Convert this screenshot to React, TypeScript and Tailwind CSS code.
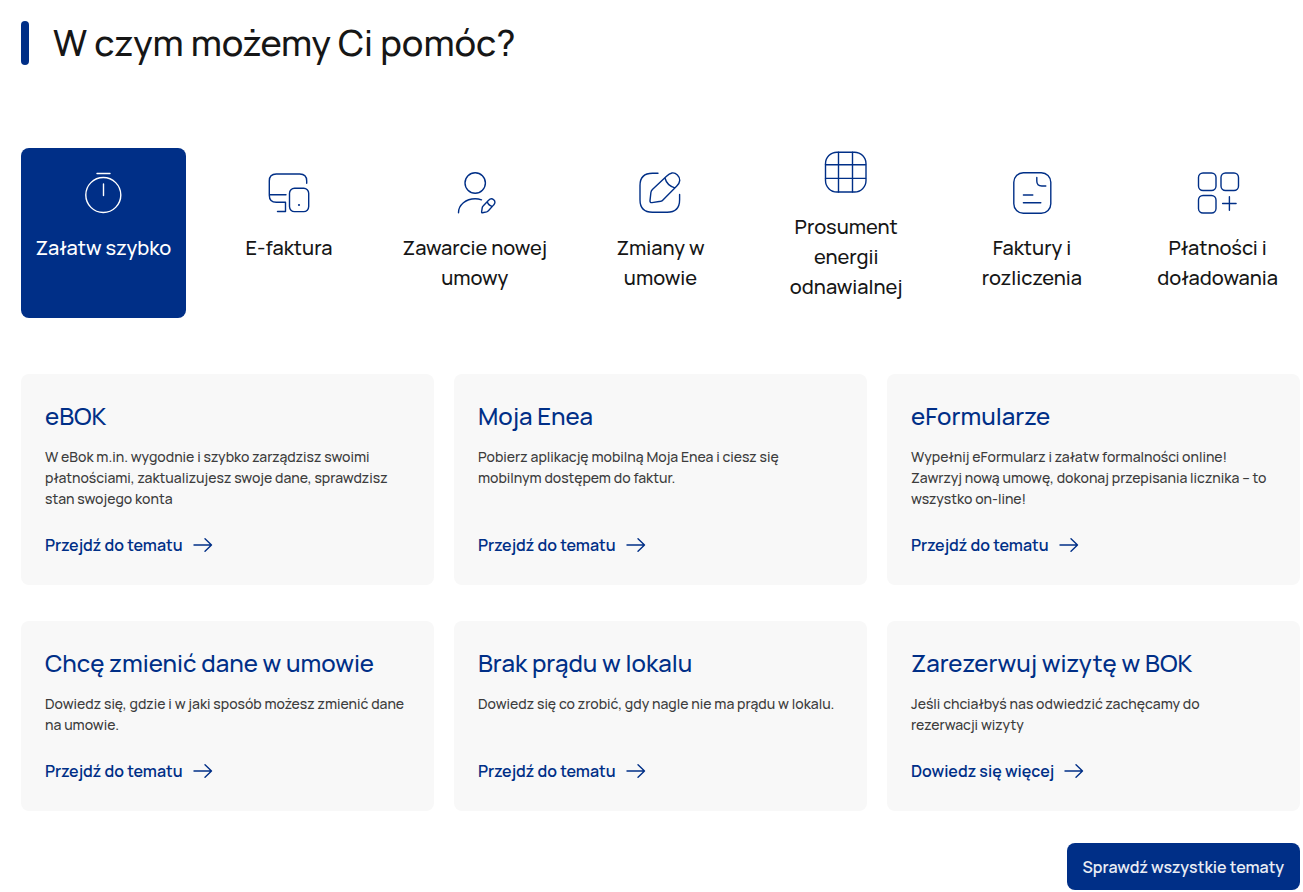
import { ReactNode, useState } from "react";
import clsx from "clsx";

type Topic = {
  label: string;
  icon: ReactNode;
  tall?: boolean;
};

type CardProps = {
  title: string;
  text: string;
  link: string;
};

const topics: Topic[] = [
  {
    label: "Załatw szybko",
    icon: (
      <>
        <circle cx="24.3" cy="26" r="17.5" />
        <path d="M18 4.5h13M24.5 15v11.5" />
      </>
    ),
  },
  {
    label: "E-faktura",
    icon: (
      <>
        <path d="M41.7 14.3V12c0-5-2-7-7-7H11.3c-5 0-7 2-7 7v14.3c0 5 2 7 7 7H20.5v9.2h-8M4.3 25.7H21" />
        <rect x="24.5" y="19.3" width="19.2" height="23.3" rx="5" />
        <circle cx="34" cy="36" r="0.4" fill="currentColor" />
      </>
    ),
  },
  {
    label: "Zawarcie nowej umowy",
    icon: (
      <>
        <circle cx="24.2" cy="14" r="10.2" />
        <path d="M7.5 43.7c0-8 7.5-14 16.7-14 2.200 0 4.300.4 6.300 1.100" />
        <path d="M37.600 31.300c1.700-1.900 3.500-1.900 5.100-.5s1.700 3.300 0 5.100l-5.300 5.900c-.5.500-1 .9-1.700 1.100l-4.200.9c-.6.100-.9-.2-.9-.8l.6-4.200c.1-.7.400-1.200.9-1.700ZM36.300 32.800c.6 2.300 2.200 3.900 4.800 4.600" />
      </>
    ),
  },
  {
    label: "Zmiany w umowie",
    icon: (
      <>
        <path d="M22 4.300h-5.500C8 4.300 4 8 4 16.500v14.300C4 39.300 8 43.300 16.500 43.300h14.600c8.500 0 12.500-4 12.500-12.500v-5.300" />
        <path d="M30.500 7.300c3.500-3.700 7.400-4.800 10.900-1.400s3 7.500-.6 11L27.200 30.700c-.7.800-1.300 1.300-2.500 1.600l-8.700 1.300c-1.400.2-2.200-.6-2-2l.9-8.100c.2-1.300.6-2 1.500-2.900ZM29 9c1.200 4.900 4.400 8.200 9.800 9.800" />
      </>
    ),
  },
  {
    label: "Prosument energii odnawialnej",
    tall: true,
    icon: (
      <>
        <rect x="3.5" y="4.2" width="40.5" height="39.8" rx="11.5" />
        <path d="M16.5 4.2V44M30.5 4.2V44M3.5 16.7h40M3.5 30.4h40" />
      </>
    ),
  },
  {
    label: "Faktury i rozliczenia",
    icon: (
      <>
        <rect x="5.8" y="3.8" width="37" height="40.4" rx="9.5" />
        <path d="M28.8 8.5v3.5c0 3.8 1.5 5 5 5h4M15.4 26h9.400M15.400 33.700h17.400" />
      </>
    ),
  },
  {
    label: "Płatności i doładowania",
    icon: (
      <>
        <rect x="4.5" y="4" width="17.5" height="17.5" rx="4.5" />
        <rect x="27" y="4" width="17.5" height="17.5" rx="4.5" />
        <rect x="4.5" y="26.5" width="17.5" height="17.5" rx="4.5" />
        <path d="M28.6 34.5h13.500M35.400 27.800v13.400" />
      </>
    ),
  },
];

const cards: CardProps[] = [
  {
    title: "eBOK",
    text: "W eBok m.in. wygodnie i szybko zarządzisz swoimi płatnościami, zaktualizujesz swoje dane, sprawdzisz stan swojego konta",
    link: "Przejdź do tematu",
  },
  {
    title: "Moja Enea",
    text: "Pobierz aplikację mobilną Moja Enea i ciesz się mobilnym\u00a0dostępem do faktur.",
    link: "Przejdź do tematu",
  },
  {
    title: "eFormularze",
    text: "Wypełnij eFormularz i załatw formalności online! Zawrzyj\u00a0nową umowę, dokonaj przepisania licznika – to wszystko on-line!",
    link: "Przejdź do tematu",
  },
  {
    title: "Chcę zmienić dane w umowie",
    text: "Dowiedz się, gdzie i w jaki sposób możesz zmienić dane na umowie.",
    link: "Przejdź do tematu",
  },
  {
    title: "Brak prądu w lokalu",
    text: "Dowiedz się co zrobić, gdy nagle nie ma prądu w lokalu.",
    link: "Przejdź do tematu",
  },
  {
    title: "Zarezerwuj wizytę w BOK",
    text: "Jeśli chciałbyś nas odwiedzić zachęcamy do rezerwacji\u00a0wizyty",
    link: "Dowiedz się więcej",
  },
];

const TopicTab = ({ topic, active, onClick }: { topic: Topic; active: boolean; onClick: () => void }) => (
  <button
    type="button"
    role="tab"
    aria-selected={active}
    onClick={onClick}
    className={clsx(
      "flex min-h-[170px] cursor-pointer flex-col items-center gap-4 rounded-lg px-2 text-center text-xl leading-[30px] font-medium",
      topic.tall ? "pt-0" : "pt-[21px]",
      active ? "bg-[#002f87] text-white" : "text-[#161616]"
    )}
  >
    <svg
      viewBox="0 0 48 48"
      fill="none"
      stroke="currentColor"
      strokeWidth="1.4"
      strokeLinecap="round"
      strokeLinejoin="round"
      aria-hidden="true"
      className={clsx("size-12 shrink-0", active ? "text-white" : "text-[#002f87]")}
    >
      {topic.icon}
    </svg>
    <span>{topic.label}</span>
  </button>
);

const Card = ({ title, text, link }: CardProps) => (
  <article className="flex flex-col rounded-lg bg-[#f8f8f8] px-6 pt-6 pb-7">
    <h3 className="text-2xl leading-9 font-medium text-[#002f87]">{title}</h3>
    <p className="mt-3 mb-6 text-sm leading-[21px] font-medium text-[#3c3c3c]">{text}</p>
    <a href="#" className="mt-auto flex items-center gap-[10px] self-start leading-6 font-semibold text-[#002f87]">
      {link}
      <svg
        viewBox="0 0 20 20"
        fill="none"
        stroke="currentColor"
        strokeWidth="1.4"
        strokeLinecap="round"
        strokeLinejoin="round"
        aria-hidden="true"
        className="size-5"
      >
        <path d="M1 10h17.500M12 3.700l6.500 6.300-6.500 6.300" />
      </svg>
    </a>
  </article>
);

const App = () => {
  const [active, setActive] = useState(0);

  return (
    <main className="bg-white pt-[21px] pr-[3px] pb-[2px] pl-[21px] font-['Manrope','Inter',sans-serif]">
      <div className="flex gap-6">
        <span className="w-2 rounded-full bg-[#002f87]" />
        <h2 className="text-4xl leading-[44px] font-medium text-[#161616]">W czym możemy Ci pomóc?</h2>
      </div>

      <div role="tablist" className="mt-[83px] grid grid-cols-7 gap-[21px]">
        {topics.map((topic, index) => (
          <TopicTab key={topic.label} topic={topic} active={index === active} onClick={() => setActive(index)} />
        ))}
      </div>

      <div className="mt-14 grid grid-cols-3 gap-x-5 gap-y-9">
        {cards.map((card) => (
          <Card key={card.title} {...card} />
        ))}
      </div>

      <div className="mt-8 flex justify-end">
        <button type="button" className="h-[47px] cursor-pointer rounded-lg bg-[#002f87] px-4 font-semibold text-[#e9ecf4]">
          Sprawdź wszystkie tematy
        </button>
      </div>
    </main>
  );
};

export default App;
